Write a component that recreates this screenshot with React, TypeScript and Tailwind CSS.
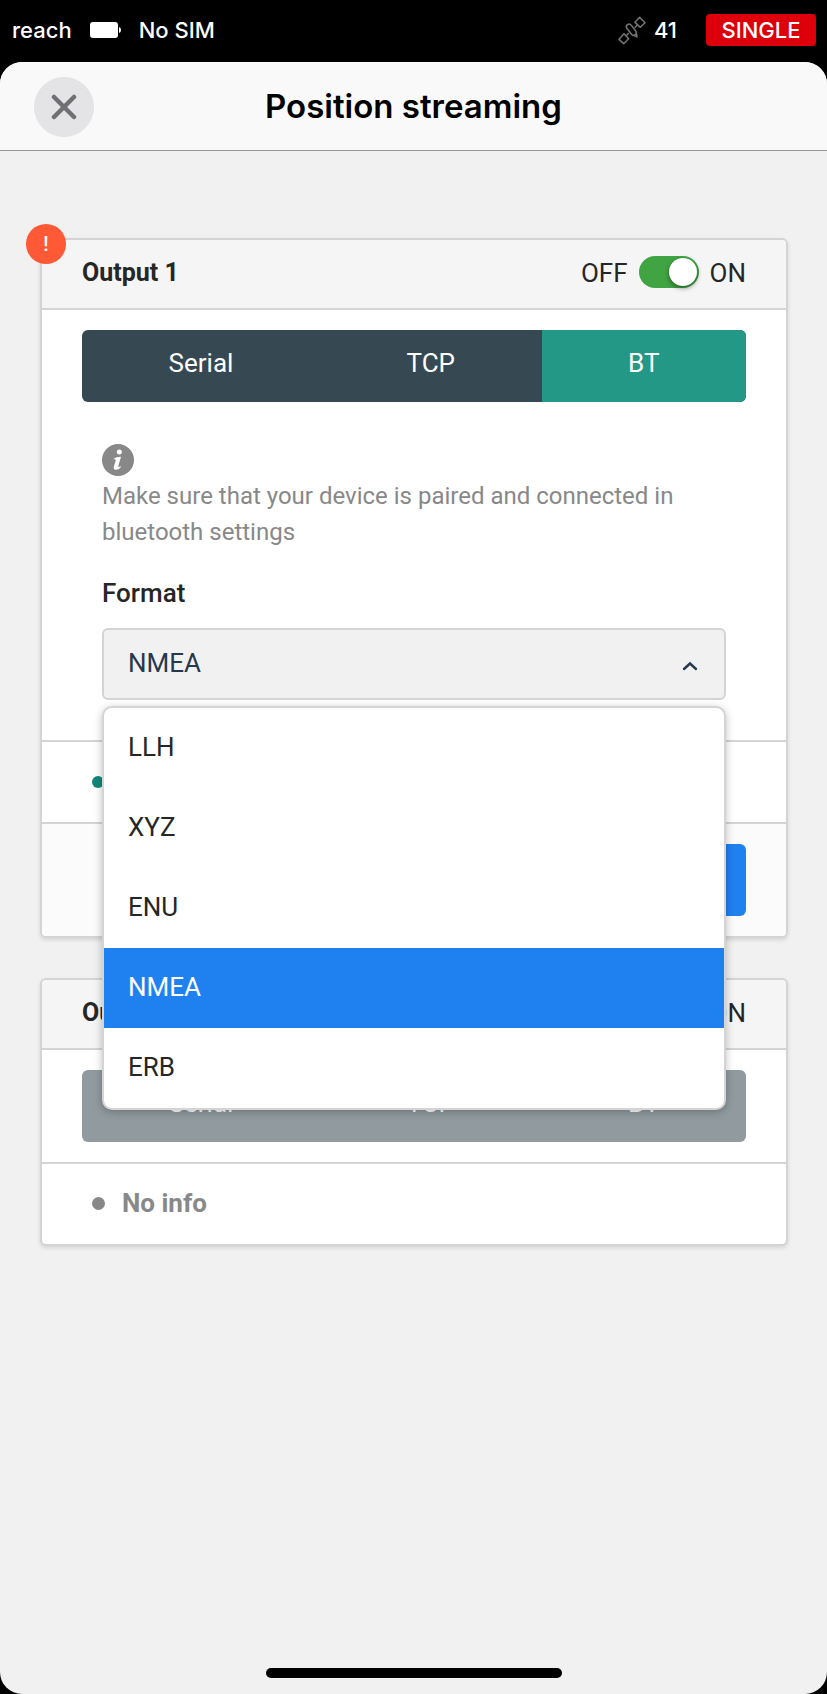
import { useState } from "react";

const FORMATS = ["LLH", "XYZ", "ENU", "NMEA", "ERB"];

function SatelliteIcon() {
  return (
    <svg className="h-[29px] w-7" viewBox="54 31 84 87" fill="none" stroke="#757575" strokeWidth="4.5" strokeLinejoin="round" aria-hidden="true">
      <path d="M119 35 L135 51 L121 65 L105 50 Z" />
      <path d="M72 84 L86 99 L71 114 L57 101 Z" />
      <rect x="86" y="53" width="16" height="38" rx="8" transform="rotate(-38 94 72)" />
      <path d="M104 66 L112 58 M79 90 L86 82" />
      <path d="M103 90 L111 94 L110 85" />
    </svg>
  );
}

function InfoIcon() {
  return (
    <svg className="size-8" viewBox="0 0 96 96" aria-hidden="true">
      <circle cx="48" cy="48" r="48" fill="#888888" />
      <circle cx="52" cy="24" r="7.5" fill="#fff" />
      <path d="M33 46 C39 40 48 38 57 38 L49 66 C48 70 51 70 58 66 C55 74 46 79 39 77 C34 75 35 70 36 66 L41 50 C42 46 39 45 33 46 Z" fill="#fff" />
    </svg>
  );
}

function StatusBar() {
  return (
    <div className="flex h-[62px] items-center justify-between pt-[2px] pr-[11px] pb-1 pl-3 font-['Inter',sans-serif] text-[22px] font-medium text-white">
      <div className="flex items-center">
        <span>reach</span>
        <svg className="mx-[18px] h-4 w-[31px]" viewBox="0 0 31 16" fill="#fff" role="img" aria-label="Battery full">
          <rect width="28" height="16" rx="3" />
          <path d="M29 5 Q31 5.500 31 8 Q31 10.500 29 11 Z" />
        </svg>
        <span>No SIM</span>
      </div>
      <div className="flex items-center">
        <SatelliteIcon />
        <span className="mr-[29px] ml-2">41</span>
        <span className="flex h-8 w-[110px] items-center justify-center rounded bg-[#dd000b]">SINGLE</span>
      </div>
    </div>
  );
}

function OnOffSwitch({ label, initial }: { label: string; initial: boolean }) {
  const [on, setOn] = useState(initial);
  return (
    <label className="flex items-center gap-[11px] text-[26px]">
      <span className="pt-[2px]">OFF</span>
      <input type="checkbox" role="switch" aria-label={label} checked={on} onChange={() => setOn(!on)} className="peer sr-only" />
      <span className="flex h-8 w-[60px] items-center rounded-full bg-[#b5b5b5] p-[2px] peer-checked:justify-end peer-checked:bg-[#40a443]">
        <span className="size-7 rounded-full bg-white shadow-[0_2px_5px_rgba(0,0,0,0.45)]" />
      </span>
      <span className="pt-[2px]">ON</span>
    </label>
  );
}

function Tabs({ selected, disabled }: { selected?: string; disabled?: boolean }) {
  const [active, setActive] = useState(selected);
  return (
    <div className={`flex h-[72px] overflow-hidden rounded-md bg-[#364852] ${disabled ? "opacity-55" : ""}`}>
      {["Serial", "TCP", "BT"].map((name) => (
        <button
          key={name}
          type="button"
          disabled={disabled}
          onClick={() => setActive(name)}
          className={`flex-auto pb-1.5 text-[26px] text-white ${active === name ? "bg-[#249887]" : ""}`}
        >
          {name}
        </button>
      ))}
    </div>
  );
}

function CardHeader({ title, on }: { title: string; on: boolean }) {
  return (
    <div className="flex h-[70px] items-center justify-between rounded-t-sm border-b-2 border-[#d4d4d4] bg-[#f5f5f5] px-10 pb-1">
      <h2 className="pt-[2px] text-[25px] font-bold">{title}</h2>
      <OnOffSwitch label={title} initial={on} />
    </div>
  );
}

function FormatSelect() {
  const [open, setOpen] = useState(true);
  const [value, setValue] = useState("NMEA");
  return (
    <div className="relative">
      <select
        id="format"
        value={value}
        onChange={(e) => setValue(e.target.value)}
        onMouseDown={(e) => {
          e.preventDefault();
          setOpen(!open);
        }}
        className="block h-[72px] w-full appearance-none rounded-md border-2 border-[#d4d4d4] bg-[#f1f1f1] px-6 pb-[2px] text-[26px] text-[#26384d] outline-none"
      >
        {FORMATS.map((f) => (
          <option key={f}>{f}</option>
        ))}
      </select>
      <svg className="pointer-events-none absolute top-[33px] right-7 h-[10px] w-4" viewBox="0 0 16 10" fill="none" stroke="#26384d" strokeWidth="2.4" aria-hidden="true">
        <path d="M2 8 L8 2.500 L14 8" strokeLinecap="round" />
      </svg>
      {open && (
        <ul role="listbox" aria-label="Format" className="absolute inset-x-0 top-[78px] z-10 overflow-hidden rounded-[10px] border-2 border-[#d4d4d4] bg-white shadow-[0_2px_8px_rgba(0,0,0,0.25)]">
          {FORMATS.map((f) => (
            <li key={f} role="option" aria-selected={f === value}>
              <button
                type="button"
                onClick={() => {
                  setValue(f);
                  setOpen(false);
                }}
                className={`flex h-20 w-full items-center px-6 pb-[2px] text-[26px] ${f === value ? "bg-[#1f80f0] text-white" : ""}`}
              >
                {f}
              </button>
            </li>
          ))}
        </ul>
      )}
    </div>
  );
}

const CARD = "relative rounded-md border-2 border-[#d4d4d4] bg-white shadow-[0_2px_4px_rgba(0,0,0,0.12)]";

export default function App() {
  return (
    <div className="flex min-h-screen flex-col bg-black font-['Roboto',sans-serif] text-[#262626]">
      <StatusBar />
      <div className="flex flex-1 flex-col overflow-hidden rounded-[22px] bg-[#f1f1f1]">
        <header className="grid h-[89px] grid-cols-[1fr_auto_1fr] items-center border-b border-[#999] bg-[#f9f9f9] px-[34px] pt-[2px]">
          <button type="button" aria-label="Close" className="flex size-[60px] items-center justify-center rounded-full bg-[#e4e4e6]">
            <svg className="size-[26px]" viewBox="0 0 26 26" stroke="#707074" strokeWidth="4.5" strokeLinecap="round" aria-hidden="true">
              <path d="M3 3 L23 23 M23 3 L3 23" />
            </svg>
          </button>
          <h1 className="font-['Inter',sans-serif] text-[33px] font-semibold text-black">Position streaming</h1>
        </header>

        <main className="flex flex-1 flex-col gap-10 pt-[87px] pr-[39px] pl-10">
          <section className={CARD}>
            <span className="absolute -top-4 -left-4 flex size-10 items-center justify-center rounded-full bg-[#ff5a35] text-xl font-medium text-white">!</span>
            <CardHeader title="Output 1" on />
            <div className="px-10 pt-5 pb-10">
              <Tabs selected="BT" />
              <div className="px-5 pt-[42px]">
                <InfoIcon />
                <p className="mt-[2px] text-2xl leading-9 text-[#888]">Make sure that your device is paired and connected in bluetooth settings</p>
                <label htmlFor="format" className="mt-6 mb-4 block text-[26px] leading-[38px] font-medium">Format</label>
                <FormatSelect />
              </div>
            </div>
            <div className="flex h-[82px] items-center border-t-2 border-[#d4d4d4] px-[50px]">
              <span className="size-3 rounded-full bg-[#118877]" />
            </div>
            <div className="flex justify-end rounded-b-sm border-t-2 border-[#d4d4d4] bg-[#fbfbfb] px-10 py-5">
              <button type="button" aria-label="Apply" className="h-[72px] w-44 rounded-md bg-[#1f80f0]" />
            </div>
          </section>

          <section className={CARD}>
            <CardHeader title="Output 2" on={false} />
            <div className="px-10 py-5">
              <Tabs disabled />
            </div>
            <div className="flex h-[82px] items-center gap-[17px] border-t-2 border-[#d4d4d4] px-[50px] pb-[2px]">
              <span className="size-[13px] rounded-full bg-[#888]" />
              <span className="text-[26px] font-bold text-[#888]">No info</span>
            </div>
          </section>
        </main>

        <div className="flex justify-center pt-6 pb-4">
          <div className="h-[10px] w-[296px] rounded-full bg-black" />
        </div>
      </div>
    </div>
  );
}
